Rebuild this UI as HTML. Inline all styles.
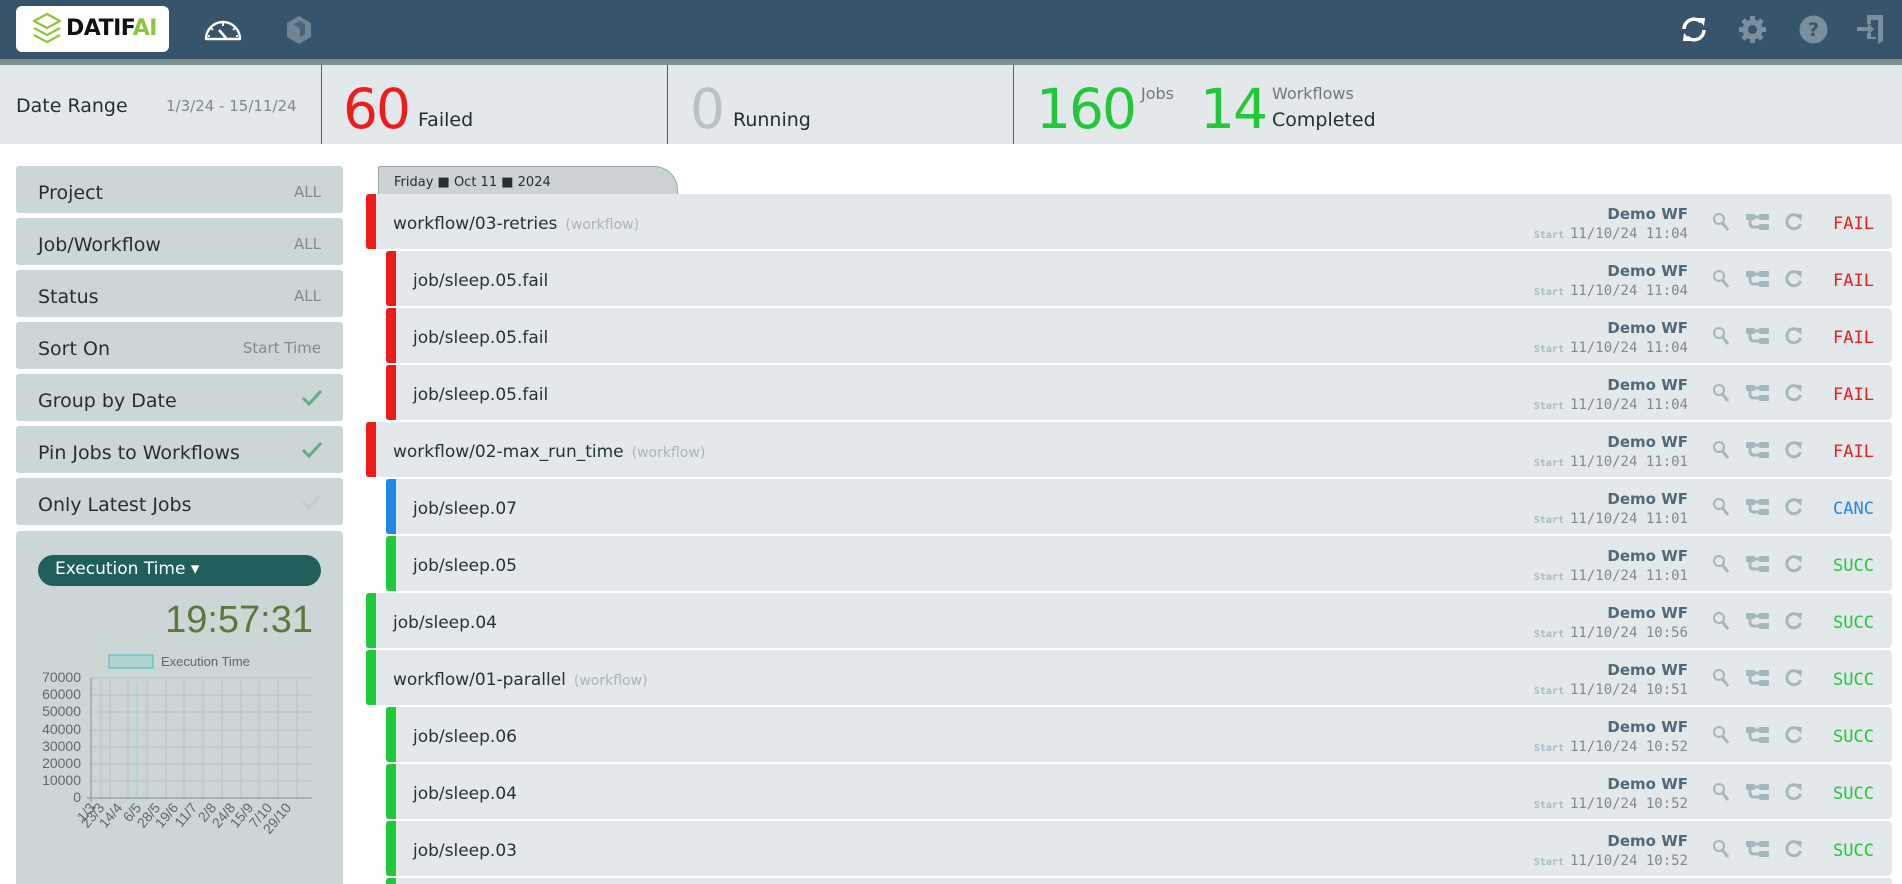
<!DOCTYPE html>
<html><head><meta charset="utf-8">
<style>
*{box-sizing:border-box;margin:0;padding:0}
html,body{width:1902px;height:884px;overflow:hidden}
body{background:#fff;font-family:"DejaVu Sans","Liberation Sans",sans-serif;color:#1f2d33;position:relative}
.abs{position:absolute}
#hdr{left:0;top:0;width:1902px;height:59px;background:#37546a}
#strip{left:0;top:59px;width:1902px;height:6px;background:#7a9291}
#stats{left:0;top:65px;width:1902px;height:79px;background:#e3e8ea}
.div{top:65px;width:1px;height:79px;background:#3e6470}
.item{left:16px;width:327px;height:47px;background:#cdd6d7;border-radius:3px}
.item .l{position:absolute;left:22px;top:16px;font-size:19px;color:#223036}
.item .r{position:absolute;right:22px;top:17px;font-size:15px;color:#7f8c8f}
.row{height:55px;background:#e3e8ea;border-radius:0 4px 4px 0}
.row .bar{position:absolute;left:0;top:0;width:10px;height:55px;border-radius:3px 0 0 3px}
.row .nm{position:absolute;left:27px;top:20px;font-size:17px;color:#22343a;white-space:nowrap}
.row .nm span{font-size:14px;color:#aab6b9;margin-left:8px}
.row .wf{position:absolute;right:204px;top:11px;font-size:15px;font-weight:bold;color:#4f6a7a}
.row .dt{position:absolute;right:204px;top:32px;font-family:"DejaVu Sans Mono",monospace;font-size:14px;color:#7d8a8f;white-space:nowrap}
.row .dt b{font-size:10px;color:#a8bbc2;font-weight:bold;margin-right:6px}
.row .st{position:absolute;left:1466px;top:20px;font-family:"DejaVu Sans Mono",monospace;font-size:17px}
.row svg.ic{position:absolute;top:18px}
</style></head><body>
<div id="hdr" class="abs"></div>
<div id="strip" class="abs"></div>
<div id="stats" class="abs"></div>

<div class="abs" style="left:16px;top:6px;width:153px;height:46px;background:#fff;border-radius:6px"></div>
<svg class="abs" style="left:30px;top:11px" width="36" height="36" viewBox="0 0 36 36" fill="none" stroke="#8dc63f" stroke-width="2.4" stroke-linejoin="round">
<path d="M4 10 L17 3 L30 10 L17 17 Z"/><path d="M4 17 L17 24 L30 17"/><path d="M4 24 L17 31 L30 24"/></svg>
<div class="abs" style="left:66px;top:16px;font-size:22px;font-weight:bold;color:#111;letter-spacing:-0.5px">DATIF<span style="color:#8dc63f">AI</span></div>
<svg class="abs" style="left:203px;top:18px" width="40" height="24" viewBox="0 0 40 24" fill="none" stroke="#fff" stroke-width="2.4">
<path d="M3 21 A17 17 0 0 1 37 21 Z" stroke-linejoin="round"/><path d="M20 8v-3M10 12l-2-2M30 12l2-2M7 18H5M33 18h2" stroke-width="1.8"/><path d="M16 12 L23 20" stroke-width="2.6"/></svg>
<svg class="abs" style="left:286px;top:15px" width="26" height="30" viewBox="0 0 26 30"><path d="M13 1 L25 8 V22 L13 29 L1 22 V8 Z" fill="#6f8595"/><path d="M8 9 L14 6 L19 9 V19 L14 22 V13 L8 10Z" fill="#4d6273"/></svg>
<svg class="abs" style="left:1680px;top:15px" width="28" height="29" viewBox="0 0 28 29" fill="none" stroke="#fff" stroke-width="3.4"><path d="M4 14 A10 10 0 0 1 21 7"/><path d="M24 15 A10 10 0 0 1 7 22"/><path d="M17 3 L25 3 L24 11Z" fill="#fff" stroke="none"/><path d="M11 26 L3 26 L4 18Z" fill="#fff" stroke="none"/></svg>
<svg class="abs" style="left:1738px;top:15px" width="29" height="29" viewBox="0 0 29 29"><g fill="#7a8f9d"><circle cx="14.5" cy="14.5" r="10"/><g stroke="#7a8f9d" stroke-width="5"><path d="M14.5 1v27M1 14.5h27M5 5l19 19M24 5L5 24"/></g></g><circle cx="14.5" cy="14.5" r="4.5" fill="#37546a"/></svg>
<svg class="abs" style="left:1799px;top:15px" width="29" height="29" viewBox="0 0 29 29"><circle cx="14.5" cy="14.5" r="14" fill="#7a8f9d"/><text x="14.5" y="21" text-anchor="middle" font-family="DejaVu Sans" font-weight="bold" font-size="19" fill="#37546a">?</text></svg>
<svg class="abs" style="left:1856px;top:14px" width="28" height="31" viewBox="0 0 28 31" fill="#7a8f9d"><path d="M11 1 H27 V27 L22 30 V6 H15 V10 H11Z"/><path d="M11 19 H15 V23 H20 V25 H11Z"/><path d="M1 13 H12 V9 L18 15 L12 21 V17 H1Z"/></svg>

<div class="abs" style="left:16px;top:95px;font-size:19px;color:#223036">Date Range</div>
<div class="abs" style="left:166px;top:97px;font-size:15px;color:#7d898c">1/3/24 - 15/11/24</div>
<div class="abs div" style="left:321px"></div>
<div class="abs" style="left:343px;top:82px;font-size:55px;color:#ef1c1c;line-height:1;letter-spacing:-2px">60</div>
<div class="abs" style="left:418px;top:109px;font-size:19px;color:#223036">Failed</div>
<div class="abs div" style="left:667px"></div>
<div class="abs" style="left:690px;top:82px;font-size:55px;color:#b7c3c5;line-height:1">0</div>
<div class="abs" style="left:733px;top:109px;font-size:19px;color:#223036">Running</div>
<div class="abs div" style="left:1013px"></div>
<div class="abs" style="left:1036px;top:82px;font-size:55px;color:#22c83a;line-height:1;letter-spacing:-2px">160</div>
<div class="abs" style="left:1141px;top:84px;font-size:16px;color:#6d7b80">Jobs</div>
<div class="abs" style="left:1200px;top:82px;font-size:55px;color:#22c83a;line-height:1;letter-spacing:-2px">14</div>
<div class="abs" style="left:1272px;top:84px;font-size:16px;color:#6d7b80">Workflows</div>
<div class="abs" style="left:1272px;top:109px;font-size:19px;color:#223036">Completed</div>

<div class="abs item" style="top:166px"><span class="l">Project</span><span class="r">ALL</span></div>
<div class="abs item" style="top:218px"><span class="l">Job/Workflow</span><span class="r">ALL</span></div>
<div class="abs item" style="top:270px"><span class="l">Status</span><span class="r">ALL</span></div>
<div class="abs item" style="top:322px"><span class="l">Sort On</span><span class="r">Start Time</span></div>
<div class="abs item" style="top:374px"><span class="l">Group by Date</span><svg class="abs" style="right:20px;top:15px" width="22" height="18" viewBox="0 0 22 18" fill="none" stroke="#5fae86" stroke-width="3"><path d="M2 9 L8 15 L20 2"/></svg></div>
<div class="abs item" style="top:426px"><span class="l">Pin Jobs to Workflows</span><svg class="abs" style="right:20px;top:15px" width="22" height="18" viewBox="0 0 22 18" fill="none" stroke="#5fae86" stroke-width="3"><path d="M2 9 L8 15 L20 2"/></svg></div>
<div class="abs item" style="top:478px"><span class="l">Only Latest Jobs</span><svg class="abs" style="right:20px;top:15px" width="22" height="18" viewBox="0 0 22 18" fill="none" stroke="#bfcdcc" stroke-width="3"><path d="M2 9 L8 15 L20 2"/></svg></div>

<div class="abs" style="left:16px;top:531px;width:327px;height:360px;background:#cdd6d7;border-radius:4px">
  <div class="abs" style="left:22px;top:24px;width:283px;height:31px;background:#215f5c;border-radius:16px;color:#fff;font-size:17px;padding:4px 0 0 17px">Execution Time ▾</div>
  <div class="abs" style="right:30px;top:68px;font-size:38px;color:#5a7a3a;font-family:'Liberation Sans',sans-serif">19:57:31</div>
  <svg class="abs" style="left:0;top:0" width="327" height="350" font-family="Liberation Sans, sans-serif">
    <rect x="93" y="124" width="44" height="13" fill="#b3d3d2" stroke="#3fbdbd" stroke-width="1"/>
    <text x="145" y="135" font-size="13" fill="#666">Execution Time</text>
    <g stroke="#b8c2c2" stroke-width="1">
      <path d="M75 147H296M75 164H296M75 181H296M75 199H296M75 216H296M75 233H296M75 250H296"/>
      <path d="M85 147V267M94 147V267M112 147V267M131 147V267M150 147V267M168 147V267M187 147V267M206 147V267M225 147V267M243 147V267M262 147V267M281 147V267"/>
    </g>
    <path d="M75 147V271M71 267H296" stroke="#999" stroke-width="1.2"/>
    <path d="M121 151V267" stroke="#9fd3d3" stroke-width="1"/>
    <g font-size="14" fill="#666" text-anchor="end">
      <text x="65" y="151">70000</text><text x="65" y="168">60000</text><text x="65" y="185">50000</text><text x="65" y="203">40000</text><text x="65" y="220">30000</text><text x="65" y="237">20000</text><text x="65" y="254">10000</text><text x="65" y="271">0</text>
    </g>
    <g font-size="14" fill="#666" text-anchor="end">
      <text transform="translate(80,277) rotate(-50)">1/3</text>
      <text transform="translate(89,277) rotate(-50)">23/3</text>
      <text transform="translate(107,277) rotate(-50)">14/4</text>
      <text transform="translate(126,277) rotate(-50)">6/5</text>
      <text transform="translate(145,277) rotate(-50)">28/5</text>
      <text transform="translate(163,277) rotate(-50)">19/6</text>
      <text transform="translate(182,277) rotate(-50)">11/7</text>
      <text transform="translate(201,277) rotate(-50)">2/8</text>
      <text transform="translate(220,277) rotate(-50)">24/8</text>
      <text transform="translate(238,277) rotate(-50)">15/9</text>
      <text transform="translate(257,277) rotate(-50)">7/10</text>
      <text transform="translate(276,277) rotate(-50)">29/10</text>
    </g>
  </svg>
</div>

<div class="abs" style="left:378px;top:166px;width:300px;height:30px;background:#cdd3d5;border:1px solid #9aa5a8;border-bottom:none;border-radius:2px 24px 0 0;font-size:13px;color:#223036;padding:8px 0 0 15px">Friday ■ Oct 11 ■ 2024</div>

<div id="rows"></div>
<script>
var R=[
[0,'workflow/03-retries',1,'f','11:04'],
[1,'job/sleep.05.fail',0,'f','11:04'],
[1,'job/sleep.05.fail',0,'f','11:04'],
[1,'job/sleep.05.fail',0,'f','11:04'],
[0,'workflow/02-max_run_time',1,'f','11:01'],
[1,'job/sleep.07',0,'c','11:01'],
[1,'job/sleep.05',0,'s','11:01'],
[0,'job/sleep.04',0,'s','10:56'],
[0,'workflow/01-parallel',1,'s','10:51'],
[1,'job/sleep.06',0,'s','10:52'],
[1,'job/sleep.04',0,'s','10:52'],
[1,'job/sleep.03',0,'s','10:52'],
[1,'job/sleep.02',0,'s','10:52']];
var C={f:['#ef1a1a','FAIL'],c:['#1e88e5','CANC'],s:['#20c93a','SUCC']};
var h='';
R.forEach(function(r,i){
 var left=r[0]?386:366, top=194+i*57, w=1892-left, c=C[r[3]];
 h+='<div class="abs row" style="left:'+left+'px;top:'+top+'px;width:'+w+'px"><div class="bar" style="background:'+c[0]+'"></div>'+
 '<div class="nm">'+r[1]+(r[2]?'<span>(workflow)</span>':'')+'</div>'+
 '<div class="wf">Demo WF</div><div class="dt"><b>Start</b>11/10/24 '+r[4]+'</div>'+
 '<svg class="ic" style="left:'+(1712-left)+'px" width="18" height="20" viewBox="0 0 18 20" fill="none" stroke="#a3b7bc" stroke-width="2"><circle cx="7" cy="7" r="5"/><path d="M10.5 11 L16 18" stroke-width="3"/></svg>'+
 '<svg class="ic" style="left:'+(1745-left)+'px" width="26" height="20" viewBox="0 0 26 20" fill="#a3b7bc"><rect x="1" y="2" width="9" height="6" rx="1"/><rect x="14" y="2" width="10" height="6" rx="1"/><rect x="14" y="12" width="10" height="6" rx="1"/><path d="M5 8 V11 Q5 15 9 15 H14" fill="none" stroke="#a3b7bc" stroke-width="3"/><path d="M10 5 H14" stroke="#a3b7bc" stroke-width="3"/></svg>'+
 '<svg class="ic" style="left:'+(1784-left)+'px" width="20" height="20" viewBox="0 0 20 20" fill="none" stroke="#a3b7bc" stroke-width="3"><path d="M15 5 A7 7 0 1 0 16.5 12"/><path d="M11 2 L18 2 L17 9Z" fill="#a3b7bc" stroke="none"/></svg>'+
 '<div class="st" style="left:'+(1833-left)+'px;color:'+c[0]+'">'+c[1]+'</div></div>';
});
document.getElementById('rows').innerHTML=h;
</script>
</body></html>
